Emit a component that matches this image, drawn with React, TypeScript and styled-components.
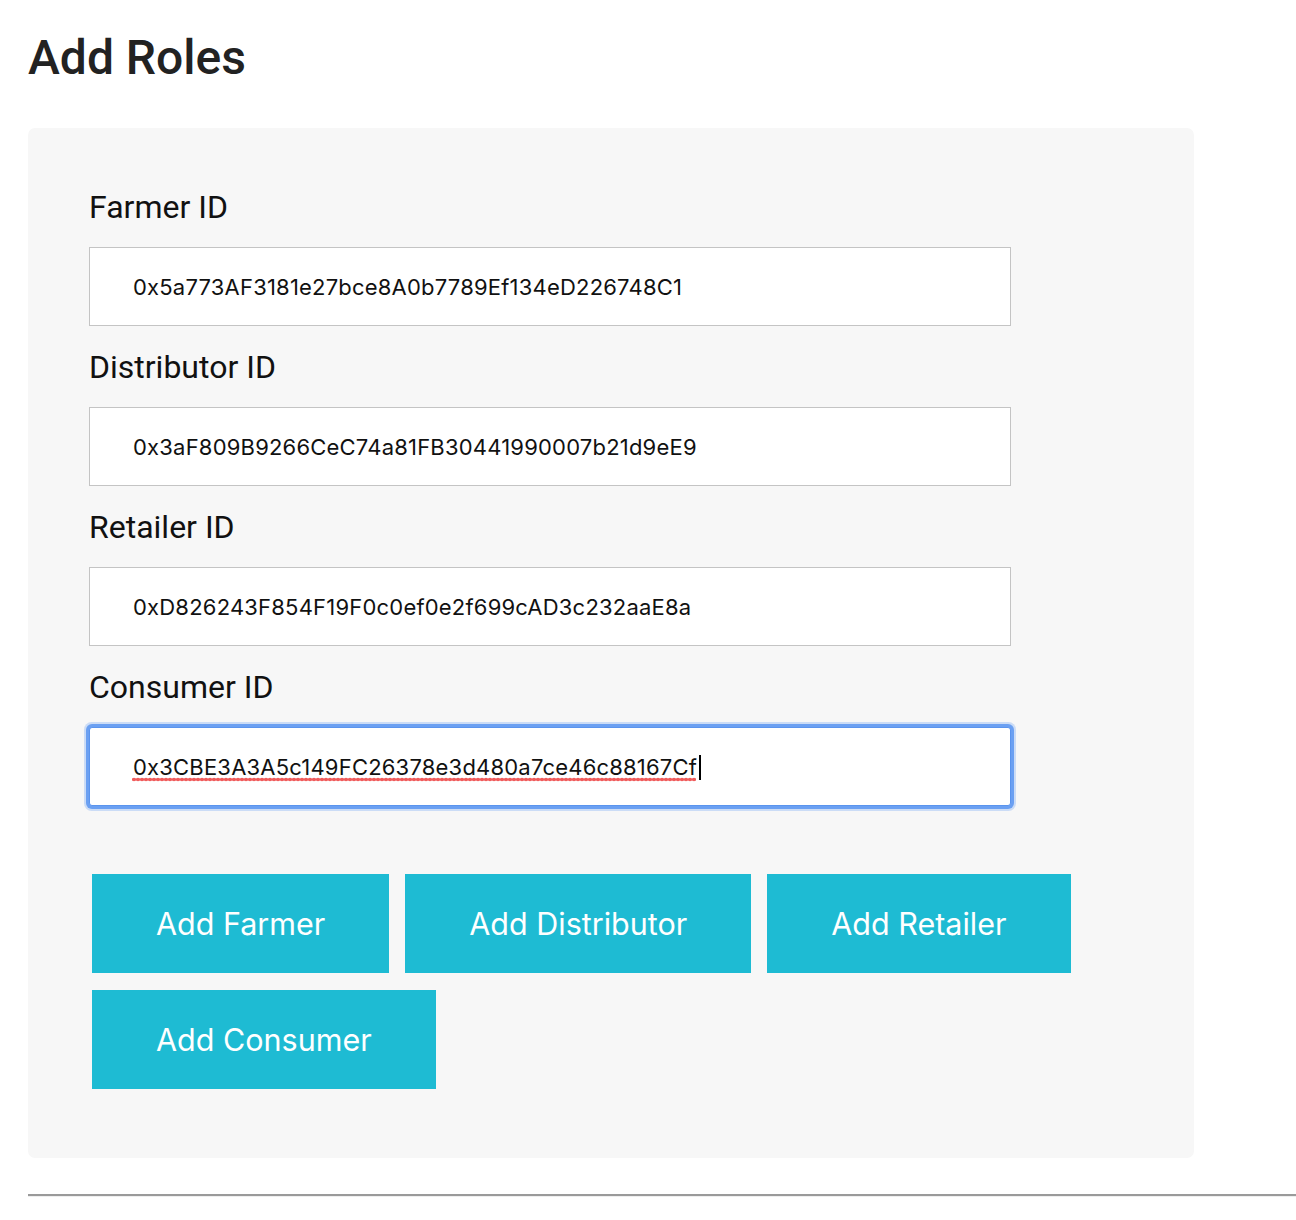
import styled, { createGlobalStyle } from 'styled-components';

const GlobalStyle = createGlobalStyle`
    body {
        margin: 0;
        background: #ffffff;
        font-family: Roboto, "Liberation Sans", sans-serif;
        color: #212121;
        overflow-x: hidden;
    }
`;

const Page = styled.div`
    padding: 28px 0 40px 28px;
`;

const Title = styled.h1`
    margin: 0 0 40px;
    font-size: 48px;
    line-height: 60px;
    font-weight: 500;
    color: #222222;
`;

const Panel = styled.section`
    width: 1166px;
    box-sizing: border-box;
    background: #f7f7f7;
    border-radius: 7px;
    padding: 38px 61px 69px 61px;
`;

const Field = styled.div`
    display: flex;
    flex-direction: column;
    width: 922px;
`;

const Label = styled.label`
    height: 81px;
    display: flex;
    align-items: center;
    font-size: 32px;
    color: #111111;
`;

const InputWrap = styled.div`
    position: relative;
`;

const Input = styled.input<{ $focused?: boolean }>`
    box-sizing: border-box;
    display: block;
    width: 922px;
    height: 79px;
    padding: 0 0 0 43px;
    border: 1px solid ${(p) => (p.$focused ? '#5a94ee' : '#c4c4c4')};
    border-radius: ${(p) => (p.$focused ? '3px' : '0')};
    background: #ffffff;
    font-family: Inter, "Noto Sans", sans-serif;
    font-size: 22px;
    letter-spacing: 0.2px;
    color: #111111;
    outline: none;
    box-shadow: ${(p) =>
        p.$focused
            ? '0 0 0 3px #6ba0f2, 0 0 0 5px rgba(120, 168, 244, 0.35)'
            : 'none'};
`;

/* red dotted spell-check line under the focused value */
const SpellLine = styled.span`
    position: absolute;
    left: 43px;
    top: 50px;
    width: 564px;
    height: 5px;
    background-image: radial-gradient(circle, #f05c5c 1.7px, transparent 2.1px);
    background-size: 4px 5px;
    background-repeat: repeat-x;
    pointer-events: none;
`;

const Caret = styled.span`
    position: absolute;
    left: 610px;
    top: 28px;
    width: 2px;
    height: 25px;
    background: #000000;
`;

const Buttons = styled.div`
    display: flex;
    flex-wrap: wrap;
    gap: 17px 16px;
    margin: 68px 0 0 3px;
`;

const Button = styled.button`
    height: 99px;
    padding: 0 64px;
    border: none;
    border-radius: 0;
    background: #1ebbd3;
    color: #ffffff;
    font-family: Inter, "Noto Sans", sans-serif;
    font-size: 30.5px;
    cursor: pointer;
`;

const Rule = styled.hr`
    margin: 36px 0 0;
    border: none;
    border-top: 2px solid #9a9a9a;
    border-bottom: 1px solid #eeeeee;
`;

const roles = [
    { label: 'Farmer ID', value: '0x5a773AF3181e27bce8A0b7789Ef134eD226748C1' },
    { label: 'Distributor ID', value: '0x3aF809B9266CeC74a81FB30441990007b21d9eE9' },
    { label: 'Retailer ID', value: '0xD826243F854F19F0c0ef0e2f699cAD3c232aaE8a' },
    { label: 'Consumer ID', value: '0x3CBE3A3A5c149FC26378e3d480a7ce46c88167Cf' },
];

const actions = ['Add Farmer', 'Add Distributor', 'Add Retailer', 'Add Consumer'];

export default function App() {
    return (
        <Page>
            <GlobalStyle />
            <Title>Add Roles</Title>
            <Panel>
                {roles.map((role, i) => {
                    const focused = i === roles.length - 1;
                    return (
                        <Field key={role.label}>
                            <Label>{role.label}</Label>
                            <InputWrap>
                                <Input
                                    readOnly
                                    $focused={focused}
                                    defaultValue={role.value}
                                    spellCheck={false}
                                />
                                {focused && <SpellLine />}
                                {focused && <Caret />}
                            </InputWrap>
                        </Field>
                    );
                })}
                <Buttons>
                    {actions.map((a) => (
                        <Button key={a}>{a}</Button>
                    ))}
                </Buttons>
            </Panel>
            <Rule />
        </Page>
    );
}
